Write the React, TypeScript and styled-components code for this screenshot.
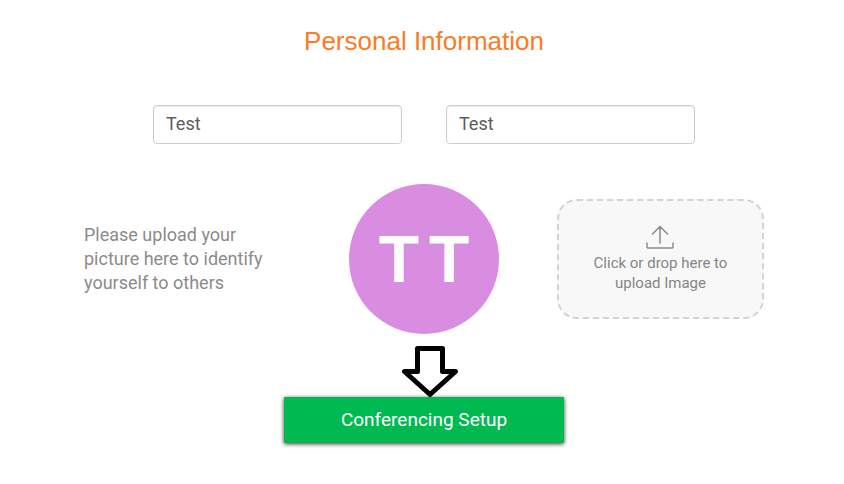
import React, { useState } from "react";
import styled, { createGlobalStyle } from "styled-components";

const GlobalStyle = createGlobalStyle`
  *, *::before, *::after { box-sizing: border-box; }
  body { margin: 0; background: #fff; font-family: Roboto, sans-serif; }
`;

const Page = styled.main`
  display: flex;
  flex-direction: column;
  align-items: center;
  padding: 24px 0 40px 4px;
`;

const Title = styled.h1`
  margin: 0;
  font: 400 26px/34px "Liberation Sans", Arial, sans-serif;
  color: #fd7a23;
`;

const NameRow = styled.div`
  display: grid;
  grid-template-columns: 1fr 1fr;
  gap: 44px;
  width: 100%;
  max-width: 542px;
  margin-top: 47px;
`;

const NameInput = styled.input`
  width: 100%;
  min-width: 0;
  height: 39px;
  padding: 0 12px 2px;
  border: 1px solid #ccc;
  border-radius: 4px;
  background: #fff;
  box-shadow: inset 0 1px 1px rgba(0, 0, 0, 0.08);
  font: 400 18px/24px Roboto, sans-serif;
  color: #5c5c5c;
  outline: none;
`;

const PictureRow = styled.section`
  display: grid;
  grid-template-columns: 1fr 150px 1fr;
  align-items: center;
  width: 100%;
  max-width: 680px;
  margin-top: 40px;
`;

const Hint = styled.p`
  max-width: 200px;
  margin: 0;
  font-size: 18px;
  line-height: 24px;
  color: #8b8b8b;
`;

const Avatar = styled.div`
  display: flex;
  align-items: center;
  justify-content: center;
  gap: 10px;
  height: 150px;
  border-radius: 50%;
  background: #d88de0;
  font: 700 66px/76px "Liberation Sans", Arial, sans-serif;
  color: #fff;
`;

const DropZone = styled.button`
  justify-self: end;
  display: flex;
  flex-direction: column;
  align-items: center;
  justify-content: center;
  gap: 4px;
  width: 207px;
  height: 120px;
  padding: 0 32px;
  border: 2px dashed #d3d3d3;
  border-radius: 20px;
  background: #f8f8f8;
  font: 400 15px/20px Roboto, sans-serif;
  color: #868686;
  cursor: pointer;
`;

const NextStep = styled.div`
  position: relative;
  width: 280px;
  margin-top: 63px;
`;

const SetupButton = styled.button`
  display: block;
  width: 100%;
  height: 46px;
  padding: 0;
  border: 0;
  border-radius: 1px;
  background: #00b950;
  box-shadow: 0 1px 4px rgba(0, 0, 0, 0.8);
  font: 400 19px/24px Roboto, sans-serif;
  color: #fff;
  cursor: pointer;
`;

const Pointer = styled.svg`
  position: absolute;
  bottom: 100%;
  left: 118px;
`;

const UploadIcon = () => (
  <svg width="29" height="24" viewBox="0 0 29 24" fill="none" stroke="#8a8a8a" strokeWidth="1.5" strokeLinecap="round" strokeLinejoin="round" aria-hidden="true">
    <path d="M14 18V2M6.5 9L14 1.5 21.5 9M1 18v4q0 1 1 1h24q1 0 1-1v-4" />
  </svg>
);

export default function App() {
  const [first, setFirst] = useState("Test");
  const [last, setLast] = useState("Test");
  return (
    <>
      <GlobalStyle />
      <Page>
        <Title>Personal Information</Title>
        <NameRow>
          <NameInput aria-label="First name" value={first} onChange={(e) => setFirst(e.target.value)} />
          <NameInput aria-label="Last name" value={last} onChange={(e) => setLast(e.target.value)} />
        </NameRow>
        <PictureRow>
          <Hint>Please upload your picture here to identify yourself to others</Hint>
          <Avatar>
            <span>{first.charAt(0)}</span>
            <span>{last.charAt(0)}</span>
          </Avatar>
          <DropZone type="button">
            <UploadIcon />
            <span>Click or drop here to upload Image</span>
          </DropZone>
        </PictureRow>
        <NextStep>
          <SetupButton type="button">Conferencing Setup</SetupButton>
          <Pointer width="56" height="52" viewBox="0 0 56 52" fill="#fff" stroke="#000" strokeWidth="5" strokeLinejoin="round" aria-hidden="true">
            <path d="M15.5 3.5h25v23h13L28 49.5 2.5 26.5h13z" />
          </Pointer>
        </NextStep>
      </Page>
    </>
  );
}
